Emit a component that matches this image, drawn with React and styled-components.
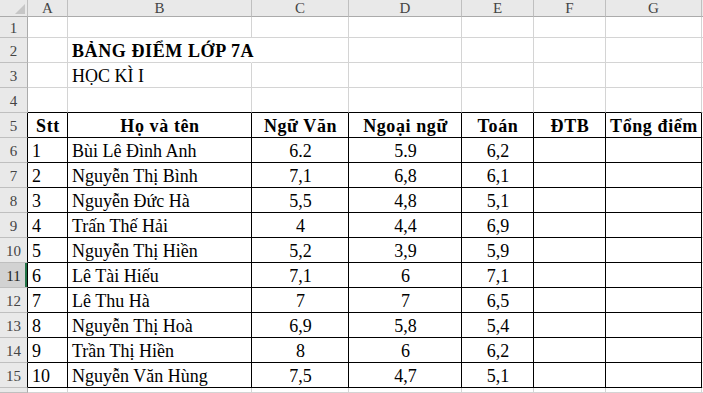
import styled, { createGlobalStyle, css } from "styled-components";

const GlobalStyle = createGlobalStyle`
  html, body {
    margin: 0;
    padding: 0;
    background: #ffffff;
    overflow: hidden;
  }
`;

const GRID = "#d4d4d4";
const HEAD_LINE = "#bfbfbf";
const INK = "#000000";

const COLUMNS = ["A", "B", "C", "D", "E", "F", "G"];

const Sheet = styled.div`
  display: grid;
  grid-template-columns: 28px 40px 184px 97px 113px 72px 72px 96px 1fr;
  grid-template-rows: 17px 21px repeat(14, 25px) 1fr;
  width: 703px;
  height: 393px;
  font-family: "Liberation Serif", "Times New Roman", serif;
  background: #ffffff;
  overflow: hidden;
`;

const Corner = styled.div`
  display: flex;
  align-items: flex-end;
  justify-content: flex-end;
  padding: 0 2px 2px 0;
  box-sizing: border-box;
  background: #e9e9e9;
  border-right: 1px solid ${HEAD_LINE};
  border-bottom: 1px solid #ababab;
`;

const ColHead = styled.div`
  display: flex;
  align-items: center;
  justify-content: center;
  box-sizing: border-box;
  background: #e9e9e9;
  border-right: 1px solid ${HEAD_LINE};
  border-bottom: 1px solid #ababab;
  color: #444444;
  font-size: 15px;
  line-height: 16px;
`;

const RowHead = styled.div`
  display: flex;
  align-items: center;
  justify-content: center;
  box-sizing: border-box;
  background: ${({ $active }) => ($active ? "#d2d2d2" : "#e9e9e9")};
  border-bottom: 1px solid ${HEAD_LINE};
  border-right: 1px solid ${({ $boxed }) => ($boxed ? INK : "#ababab")};
  color: ${({ $active }) => ($active ? "#222222" : "#444444")};
  font-size: 15px;
  line-height: 16px;
  padding-top: 2px;
  overflow: hidden;
  ${({ $active }) =>
    $active &&
    css`
      box-shadow: inset -2px 0 0 #217346;
    `}
`;

const Cell = styled.div`
  display: flex;
  align-items: flex-end;
  justify-content: ${({ $align }) =>
    $align === "center" ? "center" : "flex-start"};
  box-sizing: border-box;
  min-width: 0;
  padding: 0 3px 1px 4px;
  border-right: 1px solid ${({ $right }) => $right || GRID};
  border-bottom: 1px solid ${({ $bottom }) => $bottom || GRID};
  color: #000000;
  font-size: 18px;
  line-height: 20px;
  font-weight: ${({ $bold }) => ($bold ? 700 : 400)};
  letter-spacing: ${({ $bold }) => ($bold ? "0.6px" : "0")};
  white-space: nowrap;
  overflow: visible;
`;

const header = ["Stt", "Họ và tên", "Ngữ Văn", "Ngoại ngữ", "Toán", "ĐTB", "Tổng điểm"];

const students = [
  ["1", "Bùi Lê Đình Anh", "6.2", "5.9", "6,2"],
  ["2", "Nguyễn Thị Bình", "7,1", "6,8", "6,1"],
  ["3", "Nguyễn Đức Hà", "5,5", "4,8", "5,1"],
  ["4", "Trấn Thế Hải", "4", "4,4", "6,9"],
  ["5", "Nguyễn Thị Hiền", "5,2", "3,9", "5,9"],
  ["6", "Lê Tài Hiếu", "7,1", "6", "7,1"],
  ["7", "Lê Thu Hà", "7", "7", "6,5"],
  ["8", "Nguyễn Thị Hoà", "6,9", "5,8", "5,4"],
  ["9", "Trần Thị Hiền", "8", "6", "6,2"],
  ["10", "Nguyễn Văn Hùng", "7,5", "4,7", "5,1"],
];

const buildRow = (r) => {
  if (r === 2) return ["", "BẢNG ĐIỂM LỚP 7A"];
  if (r === 3) return ["", "HỌC KÌ I"];
  if (r === 5) return header;
  if (r >= 6 && r <= 15) return [...students[r - 6], "", ""];
  return [];
};

const cellProps = (r, c) => {
  const inTable = r >= 5 && r <= 15 && c < 7;
  const props = {};
  if (inTable) {
    props.$right = INK;
    props.$bottom = INK;
    if (r === 5 || c >= 2) props.$align = "center";
    if (r === 5) props.$bold = true;
  }
  if (r === 4 && c < 7) props.$bottom = INK;
  if (r === 2 && c === 1) {
    props.$bold = true;
    props.$right = "transparent";
  }
  return props;
};

const App = () => {
  const rows = Array.from({ length: 16 }, (_, i) => i + 1);
  return (
    <>
      <GlobalStyle />
      <Sheet>
        <Corner>
          <svg width="10" height="10" viewBox="0 0 10 10">
            <polygon points="10,0 10,10 0,10" fill="#c6c6c6" />
          </svg>
        </Corner>
        {COLUMNS.map((col) => (
          <ColHead key={col}>{col}</ColHead>
        ))}
        <ColHead />
        {rows.map((r) => {
          const values = buildRow(r);
          return [
            <RowHead key={`h${r}`} $active={r === 11} $boxed={r >= 5 && r <= 15}>
              {r <= 15 ? r : ""}
            </RowHead>,
            ...Array.from({ length: 8 }, (_, c) => (
              <Cell key={`${r}-${c}`} {...cellProps(r, c)}>
                {values[c] || ""}
              </Cell>
            )),
          ];
        })}
      </Sheet>
    </>
  );
};

export default App;
